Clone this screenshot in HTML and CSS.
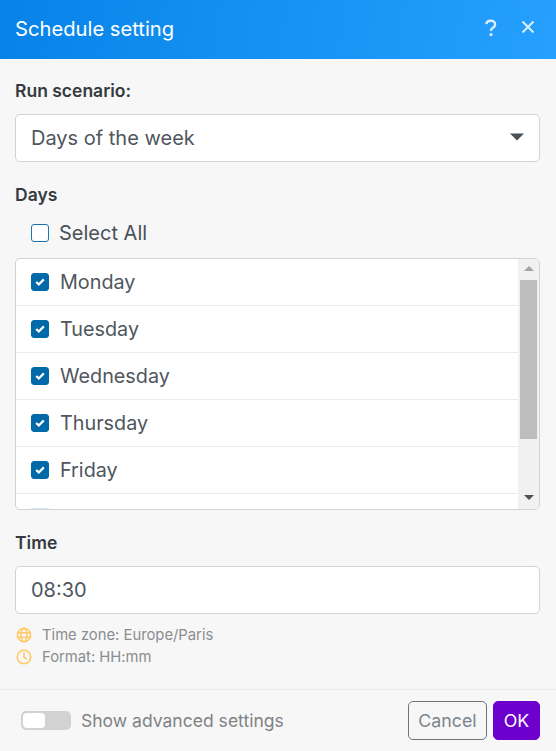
FILE: index.html
```html
<!DOCTYPE html>
<html lang="en">
<head>
<meta charset="utf-8">
<title>Schedule setting</title>
<link rel="stylesheet" href="styles.css">
</head>
<body>
<div class="dialog">
  <header class="head">
    <h1 class="title">Schedule setting</h1>
    <svg class="hicon help" width="12" height="18" viewBox="0 0 12 18"><path d="M1.400 5.200C1.600 3 3.400 1.800 5.800 1.800c2.500 0 4.300 1.400 4.300 3.600 0 1.700-1 2.600-2.200 3.400C6.700 9.600 6 10.200 6 11.500v.5" fill="none" stroke="#d9eeff" stroke-width="2.400"/><circle cx="6" cy="15.600" r="1.600" fill="#d9eeff"/></svg>
    <svg class="hicon close" width="14" height="14" viewBox="0 0 14 14"><path d="M1.500 1.500l11 11M12.500 1.500l-11 11" stroke="#d9eeff" stroke-width="2" fill="none"/></svg>
  </header>
  <main class="body">
    <div class="label first">Run scenario:</div>
    <div class="field select">
      <span>Days of the week</span>
      <svg class="caret" width="14" height="8" viewBox="0 0 14 8"><path d="M0 0.500h14L7 7.500z" fill="#495057"/></svg>
    </div>
    <div class="label days">Days</div>
    <div class="selectall"><span class="box"></span><span>Select All</span></div>
    <div class="list">
      <div class="rows">
        <div class="row"><span class="box on"><svg width="12" height="10" viewBox="0 0 12 10"><path d="M2.200 5l2.600 2.500L9.800 2.400" fill="none" stroke="#fff" stroke-width="2.300"/></svg></span><span>Monday</span></div>
        <div class="row"><span class="box on"><svg width="12" height="10" viewBox="0 0 12 10"><path d="M2.200 5l2.600 2.500L9.800 2.400" fill="none" stroke="#fff" stroke-width="2.300"/></svg></span><span>Tuesday</span></div>
        <div class="row"><span class="box on"><svg width="12" height="10" viewBox="0 0 12 10"><path d="M2.200 5l2.600 2.500L9.800 2.400" fill="none" stroke="#fff" stroke-width="2.300"/></svg></span><span>Wednesday</span></div>
        <div class="row"><span class="box on"><svg width="12" height="10" viewBox="0 0 12 10"><path d="M2.200 5l2.600 2.500L9.800 2.400" fill="none" stroke="#fff" stroke-width="2.300"/></svg></span><span>Thursday</span></div>
        <div class="row"><span class="box on"><svg width="12" height="10" viewBox="0 0 12 10"><path d="M2.200 5l2.600 2.500L9.800 2.400" fill="none" stroke="#fff" stroke-width="2.300"/></svg></span><span>Friday</span></div>
        <div class="row peek"><span class="stub"></span></div>
      </div>
      <div class="scrollbar">
        <svg class="arrow" width="10" height="5" viewBox="0 0 10 5"><path d="M5 0l5 5H0z" fill="#a3a3a3"/></svg>
        <div class="track"><div class="thumb"></div></div>
        <svg class="arrow" width="10" height="5" viewBox="0 0 10 5"><path d="M0 0h10L5 5z" fill="#505050"/></svg>
      </div>
    </div>
    <div class="label time">Time</div>
    <div class="field"><span>08:30</span></div>
    <div class="hint hint-first">
      <svg width="16" height="16" viewBox="0 0 16 16" fill="none" stroke="#ffc966" stroke-width="1.500"><circle cx="8" cy="8" r="6.700"/><ellipse cx="8" cy="8" rx="3" ry="6.700"/><path d="M1.500 5.700h13M1.500 10.300h13"/></svg>
      <span>Time zone: Europe/Paris</span>
    </div>
    <div class="hint">
      <svg width="16" height="16" viewBox="0 0 16 16" fill="none" stroke="#ffc966" stroke-width="1.600"><circle cx="8" cy="8" r="6.700"/><path d="M8 3.800V8.300l3 1.800"/></svg>
      <span>Format: HH:mm</span>
    </div>
  </main>
  <footer class="foot">
    <div class="toggle"><span class="knob"></span></div>
    <span class="adv">Show advanced settings</span>
    <button class="btn cancel">Cancel</button>
    <button class="btn ok">OK</button>
  </footer>
</div>
</body>
</html>
```
FILE: styles.css
```css
* { box-sizing: border-box; }
html, body { margin: 0; padding: 0; height: 100%; }
body { font-family: Inter, "Liberation Sans", sans-serif; background: #f7f7f7; color: #495057; overflow: hidden; }
.dialog { width: 556px; height: 751px; display: flex; flex-direction: column; }
.head { height: 59px; flex: none; display: flex; align-items: center; padding: 0 21px 0 15px; background: linear-gradient(100deg, #0783e8 0%, #25a0ff 100%); }
.title { margin: 0 0 3px; flex: 1; font-size: 20.200px; font-weight: 400; color: #fff; line-height: 55px; }
.hicon { display: block; }
.help { margin: -4px 24px 0 0; }
.close { margin-top: -6px; }
.body { flex: 1; padding: 0 16px 0 15px; display: flex; flex-direction: column; }
.label { font-size: 17.500px; font-weight: 600; color: #343a40; line-height: 20px; }
.label.first { margin-top: 22px; }
.label.days { margin-top: 23px; }
.label.time { margin-top: 23px; }
.field { height: 48px; margin-top: 13px; padding: 0 15px; background: #fff; border: 1px solid #ced4da; border-radius: 5px; display: flex; align-items: center; justify-content: space-between; font-size: 20px; color: #4f565d; }
.caret { margin-top: -3px; }
.selectall { display: flex; align-items: center; height: 24px; margin: 16px 0 0 16px; font-size: 20px; gap: 10px; }
.box { width: 18px; height: 18px; flex: none; border: 1.500px solid #1f75b0; border-radius: 3px; background: #fff; display: flex; align-items: center; justify-content: center; }
.box.on { background: #0069a8; border-color: #0069a8; }
.list { margin-top: 13px; height: 252px; display: flex; background: #fff; border: 1px solid #ced4da; border-radius: 5px; overflow: hidden; }
.rows { flex: 1; min-width: 0; overflow: hidden; }
.row { height: 47px; display: flex; align-items: center; gap: 11px; padding-left: 15px; border-bottom: 1px solid #e9ecef; font-size: 19.800px; color: #4f565d; }
.row.peek { border-bottom: 0; align-items: flex-end; height: 16px; }
.stub { width: 18px; height: 2px; margin-top: 14px; background: #dceaf3; }
.scrollbar { width: 21px; flex: none; background: #f1f1f1; display: flex; flex-direction: column; align-items: center; padding: 7px 0 9px; }
.arrow { flex: none; display: block; }
.track { flex: 1; width: 100%; padding: 9px 2px 0 2px; }
.thumb { height: 159px; background: #bdbdbd; }
.hint { display: flex; align-items: center; gap: 10px; height: 22px; margin-left: 1px; font-size: 14.800px; color: #8a8d90; }
.hint-first { margin-top: 10px; }
.foot { height: 62px; flex: none; display: flex; align-items: center; padding: 0 16px 0 21px; border-top: 1px solid #e9ecef; }
.toggle { width: 50px; height: 19px; border-radius: 5px; background: #d2d2d2; padding: 2px; flex: none; }
.knob { display: block; width: 22px; height: 15px; border-radius: 4px; background: #fff; }
.adv { margin-left: 10px; flex: 1; font-size: 17.550px; color: #808285; }
.btn { font-family: inherit; height: 39px; border-radius: 5px; font-size: 17.800px; padding: 0; }
.cancel { width: 79px; background: transparent; border: 1px solid #6c757d; color: #7b858e; }
.ok { width: 47px; margin-left: 6px; background: #6d00cc; border: 1px solid #6d00cc; color: #fff; }
```
